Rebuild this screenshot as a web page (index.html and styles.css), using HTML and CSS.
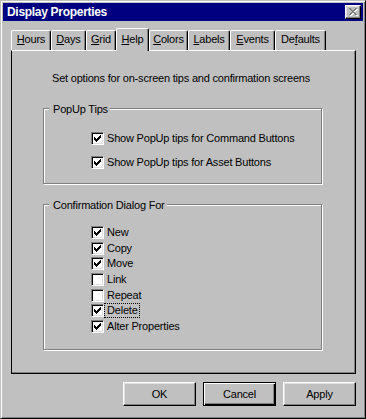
FILE: index.html
```html
<!DOCTYPE html>
<html>
<head>
<meta charset="utf-8">
<title>Display Properties</title>
<link rel="stylesheet" href="styles.css">
</head>
<body>
<div class="window">
  <div class="titlebar">
    <span class="title">Display Properties</span>
    <span class="close">
      <svg class="xicon" width="9" height="8" viewBox="0 0 9 8" shape-rendering="crispEdges">
        <g transform="translate(1 1)" fill="#fff">
          <path d="M0 0h2v1h-2z M6 0h2v1h-2z M1 1h2v1h-2z M5 1h2v1h-2z M2 2h4v1h-4z M3 3h2v1h-2z M2 4h4v1h-4z M1 5h2v1h-2z M5 5h2v1h-2z M0 6h2v1h-2z M6 6h2v1h-2z"/>
        </g>
        <path fill="#808080" d="M0 0h2v1h-2z M6 0h2v1h-2z M1 1h2v1h-2z M5 1h2v1h-2z M2 2h4v1h-4z M3 3h2v1h-2z M2 4h4v1h-4z M1 5h2v1h-2z M5 5h2v1h-2z M0 6h2v1h-2z M6 6h2v1h-2z"/>
      </svg>
    </span>
  </div>
  <div class="content">
    <div class="tabs">
      <div class="tab t-hours"><u>H</u>ours</div>
      <div class="tab t-days"><u>D</u>ays</div>
      <div class="tab t-grid"><u>G</u>rid</div>
      <div class="tab t-help active"><u>H</u>elp</div>
      <div class="tab t-colors"><u>C</u>olors</div>
      <div class="tab t-labels"><u>L</u>abels</div>
      <div class="tab t-events"><u>E</u>vents</div>
      <div class="tab t-defaults">De<u>f</u>aults</div>
    </div>
    <div class="panel">
      <p class="intro">Set options for on-screen tips and confirmation screens</p>
      <div class="group g-tips">
        <div class="legend">PopUp Tips</div>
        <div class="rows rows-tips">
          <div class="row"><span class="cb"><svg class="check" width="11" height="11" viewBox="0 0 11 11" shape-rendering="crispEdges"><path d="M2 4h1v3h-1z M3 5h1v3h-1z M4 6h1v3h-1z M5 5h1v3h-1z M6 4h1v3h-1z M7 3h1v3h-1z M8 2h1v3h-1z"/></svg></span><span class="lbl">Show PopUp tips for Command Buttons</span></div>
          <div class="row"><span class="cb"><svg class="check" width="11" height="11" viewBox="0 0 11 11" shape-rendering="crispEdges"><path d="M2 4h1v3h-1z M3 5h1v3h-1z M4 6h1v3h-1z M5 5h1v3h-1z M6 4h1v3h-1z M7 3h1v3h-1z M8 2h1v3h-1z"/></svg></span><span class="lbl">Show PopUp tips for Asset Buttons</span></div>
        </div>
      </div>
      <div class="group g-confirm">
        <div class="legend">Confirmation Dialog For</div>
        <div class="rows rows-confirm">
          <div class="row"><span class="cb"><svg class="check" width="11" height="11" viewBox="0 0 11 11" shape-rendering="crispEdges"><path d="M2 4h1v3h-1z M3 5h1v3h-1z M4 6h1v3h-1z M5 5h1v3h-1z M6 4h1v3h-1z M7 3h1v3h-1z M8 2h1v3h-1z"/></svg></span><span class="lbl">New</span></div>
          <div class="row"><span class="cb"><svg class="check" width="11" height="11" viewBox="0 0 11 11" shape-rendering="crispEdges"><path d="M2 4h1v3h-1z M3 5h1v3h-1z M4 6h1v3h-1z M5 5h1v3h-1z M6 4h1v3h-1z M7 3h1v3h-1z M8 2h1v3h-1z"/></svg></span><span class="lbl">Copy</span></div>
          <div class="row"><span class="cb"><svg class="check" width="11" height="11" viewBox="0 0 11 11" shape-rendering="crispEdges"><path d="M2 4h1v3h-1z M3 5h1v3h-1z M4 6h1v3h-1z M5 5h1v3h-1z M6 4h1v3h-1z M7 3h1v3h-1z M8 2h1v3h-1z"/></svg></span><span class="lbl">Move</span></div>
          <div class="row"><span class="cb"></span><span class="lbl">Link</span></div>
          <div class="row"><span class="cb"></span><span class="lbl">Repeat</span></div>
          <div class="row"><span class="cb"><svg class="check" width="11" height="11" viewBox="0 0 11 11" shape-rendering="crispEdges"><path d="M2 4h1v3h-1z M3 5h1v3h-1z M4 6h1v3h-1z M5 5h1v3h-1z M6 4h1v3h-1z M7 3h1v3h-1z M8 2h1v3h-1z"/></svg></span><span class="lbl focus">Delete</span></div>
          <div class="row"><span class="cb"><svg class="check" width="11" height="11" viewBox="0 0 11 11" shape-rendering="crispEdges"><path d="M2 4h1v3h-1z M3 5h1v3h-1z M4 6h1v3h-1z M5 5h1v3h-1z M6 4h1v3h-1z M7 3h1v3h-1z M8 2h1v3h-1z"/></svg></span><span class="lbl">Alter Properties</span></div>
        </div>
      </div>
    </div>
    <div class="buttons">
      <div class="btn">OK</div>
      <div class="btn default">Cancel</div>
      <div class="btn">Apply</div>
    </div>
  </div>
</div>
</body>
</html>
```
FILE: styles.css
```css
* { box-sizing: border-box; }
html, body { margin: 0; padding: 0; }
body {
  background: #c0c0c0;
  font-family: "Liberation Sans", Arial, sans-serif;
  font-size: 11px;
  letter-spacing: -0.2px;
  color: #000;
}
.window {
  width: 366px;
  height: 419px;
  border: 1px solid;
  border-color: #c0c0c0 #000 #000 #c0c0c0;
  box-shadow: inset 1px 1px #fff, inset -1px -1px #808080;
  padding: 2px;
  background: #c0c0c0;
  display: flex;
  flex-direction: column;
}
.titlebar {
  height: 18px;
  flex: none;
  background: #000080;
  color: #fff;
  display: flex;
  align-items: center;
  justify-content: space-between;
  padding: 0 2px 0 4px;
}
.title {
  font-weight: bold;
  font-size: 12px;
  letter-spacing: -0.3px;
  line-height: 14px;
}
.close {
  width: 16px;
  height: 14px;
  background: #c0c0c0;
  border: 1px solid;
  border-color: #fff #000 #000 #fff;
  box-shadow: inset -1px -1px #808080, inset 1px 1px #dfdfdf;
  display: flex;
  align-items: center;
  justify-content: center;
}
.xicon { display: block; margin-left: 1px; }
.content {
  flex: 1;
  padding: 7px 7px 0 8px;
}
.tabs {
  display: flex;
  align-items: flex-end;
  height: 22px;
}
.tab {
  height: 20px;
  border: 1px solid;
  border-bottom: none;
  border-color: #fff #000 #000 #fff;
  border-radius: 2px 2px 0 0;
  box-shadow: inset -1px 0 #808080;
  display: flex;
  justify-content: center;
  align-items: flex-start;
  padding-top: 1px;
  line-height: 14px;
  white-space: nowrap;
}
.tab.active {
  height: 23px;
  margin-bottom: -1px;
  padding-top: 3px;
  position: relative;
  z-index: 1;
  background: #c0c0c0;
}
.t-hours { width: 40px; }
.t-days { width: 35px; }
.t-grid { width: 30px; }
.t-help { width: 33px; }
.t-colors { width: 39px; }
.t-labels { width: 42px; }
.t-events { width: 45px; }
.t-defaults { width: 51px; }
.panel {
  width: 345px;
  height: 324px;
  border: 1px solid;
  border-color: #fff #000 #000 #000;
  box-shadow: inset -1px -1px #808080;
  padding-top: 20px;
}
.intro {
  margin: 0 0 0 40px;
  line-height: 15px;
  white-space: nowrap;
}
.group {
  width: 279px;
  margin-left: 31px;
  border: 1px solid #808080;
  box-shadow: 1px 1px #fff, inset 1px 1px #fff;
}
.g-tips { margin-top: 22px; padding-bottom: 14px; }
.g-confirm { margin-top: 20px; padding-bottom: 16px; }
.legend {
  width: fit-content;
  margin: -7px 0 0 5px;
  padding: 0 2px 0 4px;
  background: #c0c0c0;
  line-height: 14px;
  white-space: nowrap;
}
.rows {
  display: flex;
  flex-direction: column;
  margin-left: 47px;
}
.rows-tips { margin-top: 16px; gap: 11px; }
.rows-confirm { margin-top: 14px; gap: 2.667px; }
.row {
  display: flex;
  align-items: center;
  height: 13px;
}
.cb {
  width: 13px;
  height: 13px;
  flex: none;
  background: #fff;
  border: 1px solid;
  border-color: #808080 #fff #fff #808080;
  box-shadow: inset 1px 1px #000, inset -1px -1px #dfdfdf;
}
.check { display: block; fill: #000; }
.lbl {
  margin-left: 3px;
  line-height: 13px;
  white-space: nowrap;
}
.lbl.focus {
  margin-left: 0;
  padding: 0 1px 0 2px;
  border: 1px dotted #000;
}
.buttons {
  display: flex;
  justify-content: flex-end;
  gap: 7px;
  margin-top: 8px;
}
.btn {
  width: 73px;
  height: 24px;
  border: 1px solid;
  border-color: #fff #000 #000 #fff;
  box-shadow: inset -1px -1px #808080, inset 1px 1px #dfdfdf;
  display: flex;
  align-items: center;
  justify-content: center;
  line-height: 14px;
}
.btn.default {
  border-color: #000;
  box-shadow: inset 1px 1px #fff, inset -1px -1px #000, inset -2px -2px #808080;
}
```
